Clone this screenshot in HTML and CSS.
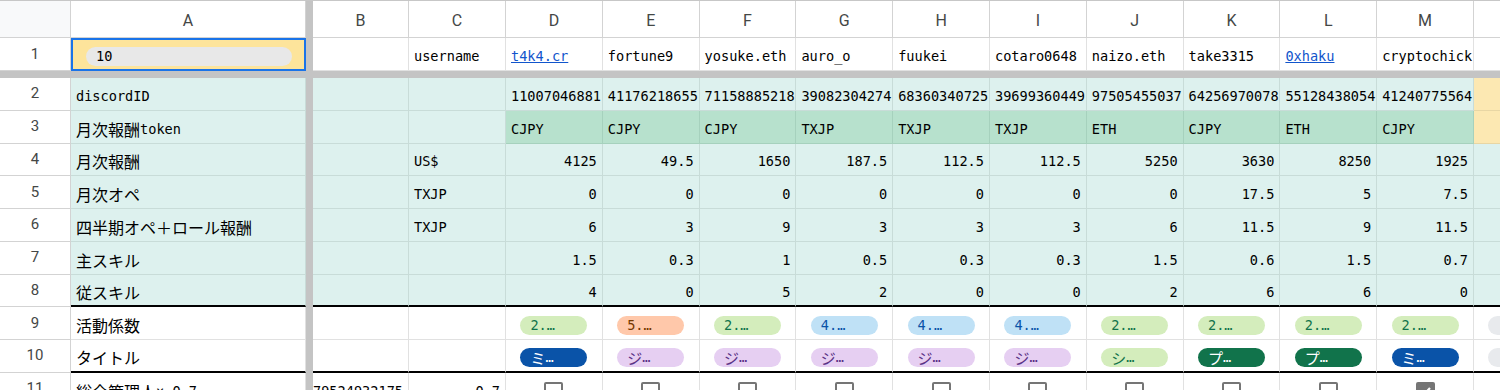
FILE: index.html
```html
<!DOCTYPE html>
<html lang="ja">
<head>
<meta charset="utf-8">
<title>Sheet</title>
<link rel="stylesheet" href="styles.css">
</head>
<body>
<div class="sheet">
  <div class="row hdr">
    <div class="c corner"></div>
    <div class="c ch">A</div>
    <div class="vf"></div>
    <div class="c ch">B</div>
    <div class="c ch">C</div>
    <div class="c ch">D</div>
    <div class="c ch">E</div>
    <div class="c ch">F</div>
    <div class="c ch">G</div>
    <div class="c ch">H</div>
    <div class="c ch">I</div>
    <div class="c ch">J</div>
    <div class="c ch">K</div>
    <div class="c ch">L</div>
    <div class="c ch">M</div>
    <div class="c ch"></div>
  </div>

  <div class="row r1">
    <div class="c rh">1</div>
    <div class="c sel"><span class="pill">10</span></div>
    <div class="vf"></div>
    <div class="c"></div>
    <div class="c">username</div>
    <div class="c"><a class="lnk" href="#">t4k4.cr</a></div>
    <div class="c">fortune9</div>
    <div class="c">yosuke.eth</div>
    <div class="c">auro_o</div>
    <div class="c">fuukei</div>
    <div class="c">cotaro0648</div>
    <div class="c">naizo.eth</div>
    <div class="c">take3315</div>
    <div class="c"><a class="lnk" href="#">0xhaku</a></div>
    <div class="c">cryptochick</div>
    <div class="c"></div>
  </div>

  <div class="hfreeze"></div>

  <div class="row d t">
    <div class="c rh">2</div>
    <div class="c">discordID</div>
    <div class="vf"></div>
    <div class="c"></div>
    <div class="c"></div>
    <div class="c">11007046881</div>
    <div class="c">41176218655</div>
    <div class="c">71158885218</div>
    <div class="c">39082304274</div>
    <div class="c">68360340725</div>
    <div class="c">39699360449</div>
    <div class="c">97505455037</div>
    <div class="c">64256970078</div>
    <div class="c">55128438054</div>
    <div class="c">41240775564</div>
    <div class="c y"></div>
  </div>

  <div class="row d t">
    <div class="c rh">3</div>
    <div class="c"><span class="ja">月次報酬</span>token</div>
    <div class="vf"></div>
    <div class="c"></div>
    <div class="c"></div>
    <div class="c g">CJPY</div>
    <div class="c g">CJPY</div>
    <div class="c g">CJPY</div>
    <div class="c g">TXJP</div>
    <div class="c g">TXJP</div>
    <div class="c g">TXJP</div>
    <div class="c g">ETH</div>
    <div class="c g">CJPY</div>
    <div class="c g">ETH</div>
    <div class="c g">CJPY</div>
    <div class="c y"></div>
  </div>

  <div class="row d t">
    <div class="c rh">4</div>
    <div class="c"><span class="ja">月次報酬</span></div>
    <div class="vf"></div>
    <div class="c"></div>
    <div class="c">US$</div>
    <div class="c n">4125</div>
    <div class="c n">49.5</div>
    <div class="c n">1650</div>
    <div class="c n">187.5</div>
    <div class="c n">112.5</div>
    <div class="c n">112.5</div>
    <div class="c n">5250</div>
    <div class="c n">3630</div>
    <div class="c n">8250</div>
    <div class="c n">1925</div>
    <div class="c"></div>
  </div>

  <div class="row d t">
    <div class="c rh">5</div>
    <div class="c"><span class="ja">月次オペ</span></div>
    <div class="vf"></div>
    <div class="c"></div>
    <div class="c">TXJP</div>
    <div class="c n">0</div>
    <div class="c n">0</div>
    <div class="c n">0</div>
    <div class="c n">0</div>
    <div class="c n">0</div>
    <div class="c n">0</div>
    <div class="c n">0</div>
    <div class="c n">17.5</div>
    <div class="c n">5</div>
    <div class="c n">7.5</div>
    <div class="c"></div>
  </div>

  <div class="row d t">
    <div class="c rh">6</div>
    <div class="c"><span class="ja">四半期オペ＋ロール報酬</span></div>
    <div class="vf"></div>
    <div class="c"></div>
    <div class="c">TXJP</div>
    <div class="c n">6</div>
    <div class="c n">3</div>
    <div class="c n">9</div>
    <div class="c n">3</div>
    <div class="c n">3</div>
    <div class="c n">3</div>
    <div class="c n">6</div>
    <div class="c n">11.5</div>
    <div class="c n">9</div>
    <div class="c n">11.5</div>
    <div class="c"></div>
  </div>

  <div class="row d t">
    <div class="c rh">7</div>
    <div class="c"><span class="ja">主スキル</span></div>
    <div class="vf"></div>
    <div class="c"></div>
    <div class="c"></div>
    <div class="c n">1.5</div>
    <div class="c n">0.3</div>
    <div class="c n">1</div>
    <div class="c n">0.5</div>
    <div class="c n">0.3</div>
    <div class="c n">0.3</div>
    <div class="c n">1.5</div>
    <div class="c n">0.6</div>
    <div class="c n">1.5</div>
    <div class="c n">0.7</div>
    <div class="c"></div>
  </div>

  <div class="row d t bb">
    <div class="c rh">8</div>
    <div class="c"><span class="ja">従スキル</span></div>
    <div class="vf"></div>
    <div class="c"></div>
    <div class="c"></div>
    <div class="c n">4</div>
    <div class="c n">0</div>
    <div class="c n">5</div>
    <div class="c n">2</div>
    <div class="c n">0</div>
    <div class="c n">0</div>
    <div class="c n">2</div>
    <div class="c n">6</div>
    <div class="c n">6</div>
    <div class="c n">0</div>
    <div class="c"></div>
  </div>

  <div class="row d">
    <div class="c rh">9</div>
    <div class="c"><span class="ja">活動係数</span></div>
    <div class="vf"></div>
    <div class="c"></div>
    <div class="c"></div>
    <div class="c cc"><span class="chip lg">2.…</span></div>
    <div class="c cc"><span class="chip lo">5.…</span></div>
    <div class="c cc"><span class="chip lg">2.…</span></div>
    <div class="c cc"><span class="chip lb">4.…</span></div>
    <div class="c cc"><span class="chip lb">4.…</span></div>
    <div class="c cc"><span class="chip lb">4.…</span></div>
    <div class="c cc"><span class="chip lg">2.…</span></div>
    <div class="c cc"><span class="chip lg">2.…</span></div>
    <div class="c cc"><span class="chip lg">2.…</span></div>
    <div class="c cc"><span class="chip lg">2.…</span></div>
    <div class="c cc"><span class="chip gr"></span></div>
  </div>

  <div class="row d bb">
    <div class="c rh">10</div>
    <div class="c"><span class="ja">タイトル</span></div>
    <div class="vf"></div>
    <div class="c"></div>
    <div class="c"></div>
    <div class="c cc"><span class="chip db"><span class="ja">ミ</span>…</span></div>
    <div class="c cc"><span class="chip lp"><span class="ja">ジ</span>…</span></div>
    <div class="c cc"><span class="chip lp"><span class="ja">ジ</span>…</span></div>
    <div class="c cc"><span class="chip lp"><span class="ja">ジ</span>…</span></div>
    <div class="c cc"><span class="chip lp"><span class="ja">ジ</span>…</span></div>
    <div class="c cc"><span class="chip lp"><span class="ja">ジ</span>…</span></div>
    <div class="c cc"><span class="chip lg"><span class="ja">シ</span>…</span></div>
    <div class="c cc"><span class="chip dg"><span class="ja">プ</span>…</span></div>
    <div class="c cc"><span class="chip dg"><span class="ja">プ</span>…</span></div>
    <div class="c cc"><span class="chip db"><span class="ja">ミ</span>…</span></div>
    <div class="c cc"><span class="chip gr"></span></div>
  </div>

  <div class="row d">
    <div class="c rh">11</div>
    <div class="c"><span class="ja">総合管理人</span> × 0.7</div>
    <div class="vf"></div>
    <div class="c n">79524932175</div>
    <div class="c n">0.7</div>
    <div class="c cc"><span class="cb"></span></div>
    <div class="c cc"><span class="cb"></span></div>
    <div class="c cc"><span class="cb"></span></div>
    <div class="c cc"><span class="cb"></span></div>
    <div class="c cc"><span class="cb"></span></div>
    <div class="c cc"><span class="cb"></span></div>
    <div class="c cc"><span class="cb"></span></div>
    <div class="c cc"><span class="cb"></span></div>
    <div class="c cc"><span class="cb"></span></div>
    <div class="c cc"><span class="cb on"><svg viewBox="0 0 18 18" width="18" height="18"><path d="M4 9.5l3.5 3.5L14 6" fill="none" stroke="#fff" stroke-width="2.2"/></svg></span></div>
    <div class="c cc"></div>
  </div>
</div>
</body>
</html>
```

FILE: styles.css
```css
* { box-sizing: border-box; margin: 0; padding: 0; }

html, body {
  width: 1500px;
  height: 390px;
  overflow: hidden;
  background: #fff;
}

body {
  font-family: "DejaVu Sans Mono", "Liberation Mono", monospace;
  font-size: 13.6px;
  color: #000;
}

.sheet {
  width: 1600px;
  border-top: 1px solid #c7c7c7;
}

.row {
  display: grid;
  grid-template-columns: 71px 235px 7px 96px 97px repeat(11, 96.8px);
}

.hdr { height: 37px; }
.r1 { height: 33px; }
.row.d { height: 32.75px; }

.hfreeze {
  height: 7px;
  background: #c4c4c4;
}

.vf { background: #c4c4c4; }

.c {
  display: flex;
  align-items: center;
  padding: 5px 5px 0;
  border-right: 1px solid #e1e1e1;
  border-bottom: 1px solid #e1e1e1;
  white-space: nowrap;
  overflow: hidden;
  line-height: 17px;
}

.corner { background: #f8f9fa; border-color: #d3d3d3; }

.ch {
  justify-content: center;
  padding: 2px 0 0;
  font-family: Roboto, "Liberation Sans", Arial, sans-serif;
  font-size: 16px;
  color: #444746;
  border-color: #d3d3d3;
}

.rh {
  justify-content: center;
  padding: 0;
  font-family: Roboto, "Liberation Sans", Arial, sans-serif;
  font-size: 15px;
  color: #444746;
  background: #fff;
  border-color: #d3d3d3;
}

.t .c { background: #ddf1ee; border-color: #c8dcd8; }
.t .c.rh { background: #fff; border-color: #d3d3d3; }
.t .c.g { background: #b7e1cd; border-color: #a6d1bd; }
.t .c.y { background: #fce8b2; border-color: #e8d6a4; }

.n { justify-content: flex-end; }
.cc { justify-content: center; }

.bb .c { border-bottom: 2px solid #000; }
.bb .c.rh { border-bottom: 1px solid #d3d3d3; }

.ja {
  font-family: "Noto Sans CJK JP", sans-serif;
  font-size: 16px;
}

.lnk {
  color: #1155cc;
  text-decoration: underline;
}

.sel {
  background: #fde49b;
  border: 2px solid #1a73e8;
  padding: 3px 12px 0 13px;
}

.pill {
  flex: 1;
  height: 19px;
  border-radius: 10px;
  background: #e8e8e8;
  padding-left: 10px;
  display: flex;
  align-items: center;
}

.chip {
  width: 67px;
  height: 19px;
  border-radius: 10px;
  padding-left: 10px;
  display: flex;
  align-items: center;
  flex: none;
}
.chip .ja { font-size: 15px; }

.lg { background: #d4edbc; color: #11734b; }
.lo { background: #ffc8aa; color: #753800; }
.lb { background: #bfe1f6; color: #0a53a8; }
.lp { background: #e6cff2; color: #5a3286; }
.db { background: #0a53a8; color: #fff; }
.dg { background: #11734b; color: #fff; }
.gr { background: #e8eaed; color: #444; }

.cb {
  width: 19px;
  height: 19px;
  border: 2px solid #757575;
  border-radius: 2px;
  flex: none;
  display: flex;
  align-items: center;
  justify-content: center;
}
.cb.on { background: #757575; }
.cb svg { display: block; flex: none; }
```
